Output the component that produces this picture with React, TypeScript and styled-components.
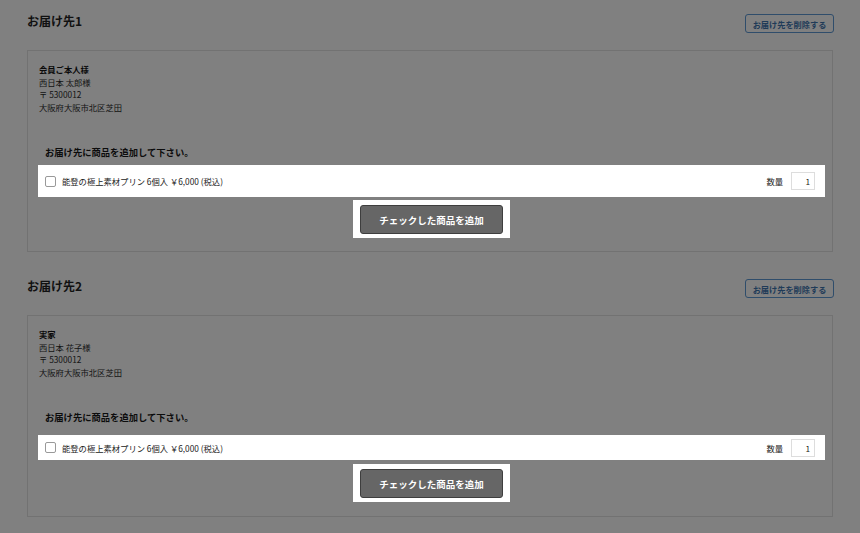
import React from "react"
import styled, { createGlobalStyle } from "styled-components"

const Global = createGlobalStyle`
  body {
    margin: 0;
    background: #808080;
    font-family: "Noto Sans CJK JP", "Noto Sans", sans-serif;
    color: #111;
  }
`

type Dest = {
    no: number
    label: string
    name: string
    zip: string
    address: string
    rowTop: number
    rowHeight: number
    btnTop: number
}

const dests: Dest[] = [
    { no: 1, label: "会員ご本人様", name: "西日本 太郎様", zip: "〒 5300012", address: "大阪府大阪市北区芝田", rowTop: 6, rowHeight: 32, btnTop: 3 },
    { no: 2, label: "実家", name: "西日本 花子様", zip: "〒 5300012", address: "大阪府大阪市北区芝田", rowTop: 11, rowHeight: 25, btnTop: 4 },
]

export default function App() {
    return <>
        <Global />
        <Page>
            {dests.map(d => <Section key={d.no}>
                <Header>
                    <Title>お届け先{d.no}</Title>
                    <DeleteButton>お届け先を削除する</DeleteButton>
                </Header>
                <Card>
                    <Address>
                        <strong>{d.label}</strong>
                        <span>{d.name}</span>
                        <span>{d.zip}</span>
                        <span>{d.address}</span>
                    </Address>
                    <Lead>お届け先に商品を追加して下さい。</Lead>
                    <ItemRow $top={d.rowTop} $h={d.rowHeight}>
                        <Check />
                        <ItemName>能登の極上素材プリン 6個入 ￥6,000 (税込)</ItemName>
                        <Qty>
                            数量
                            <QtyBox>1</QtyBox>
                        </Qty>
                    </ItemRow>
                    <ButtonWrap $top={d.btnTop}>
                        <AddButton>チェックした商品を追加</AddButton>
                    </ButtonWrap>
                </Card>
            </Section>)}
        </Page>
    </>
}

const Page = styled.div`
  padding: 14px 27px 0 27px;
  display: flex;
  flex-direction: column;
  gap: 27px;
`
const Section = styled.section`
  display: flex;
  flex-direction: column;
  gap: 17px;
`
const Header = styled.div`
  display: flex;
  justify-content: space-between;
  align-items: flex-start;
  height: 19px;
`
const Title = styled.h2`
  margin: 0;
  font-size: 12px;
  line-height: 14px;
  font-weight: 700;
  color: #111;
`
const DeleteButton = styled.button`
  box-sizing: border-box;
  width: 89px;
  height: 19px;
  padding: 0;
  margin-right: -1px;
  background: transparent;
  border: 1px solid #2f4d6b;
  border-radius: 3px;
  color: #1f3b58;
  font-family: inherit;
  font-size: 8.2px;
  font-weight: 700;
`
const Card = styled.div`
  box-sizing: border-box;
  height: 202px;
  border: 1px solid #727272;
  padding: 12px 7px 0 10px;
  display: flex;
  flex-direction: column;
`
const Address = styled.div`
  display: flex;
  flex-direction: column;
  padding-left: 1px;
  font-size: 8.3px;
  line-height: 12.5px;
  color: #121212;

  strong { font-weight: 700; color: #0a0a0a; }
`
const Lead = styled.p`
  margin: 32px 0 0 7px;
  font-size: 9.3px;
  font-weight: 700;
  line-height: 14px;
  color: #0c0c0c;
`
const ItemRow = styled.div<{ $top: number, $h: number }>`
  margin-top: ${p => p.$top}px;
  height: ${p => p.$h}px;
  background: #fff;
  display: flex;
  align-items: center;
  padding: 0 10px 0 7px;
  gap: 6px;
`
const Check = styled.span`
  box-sizing: border-box;
  width: 11px;
  height: 11px;
  border: 1px solid #999;
  border-radius: 2px;
  background: #fff;
`
const ItemName = styled.span`
  flex: 1;
  font-size: 8.3px;
  color: #222;
`
const Qty = styled.span`
  display: flex;
  align-items: center;
  gap: 8px;
  font-size: 8.3px;
  color: #222;
`
const QtyBox = styled.span`
  box-sizing: border-box;
  width: 24px;
  height: 18px;
  border: 1px solid #ddd;
  text-align: right;
  padding-right: 4px;
  line-height: 16px;
  color: #222;
`
const ButtonWrap = styled.div<{ $top: number }>`
  margin-top: ${p => p.$top}px;
  align-self: center;
  background: #fff;
  padding: 5px 7px 4px 7px;
  display: flex;
`
const AddButton = styled.button`
  box-sizing: border-box;
  width: 143px;
  height: 29px;
  background: #666;
  border: 1px solid #3e3e3e;
  border-radius: 3px;
  color: #fff;
  font-family: inherit;
  font-size: 9.5px;
  font-weight: 700;
`
